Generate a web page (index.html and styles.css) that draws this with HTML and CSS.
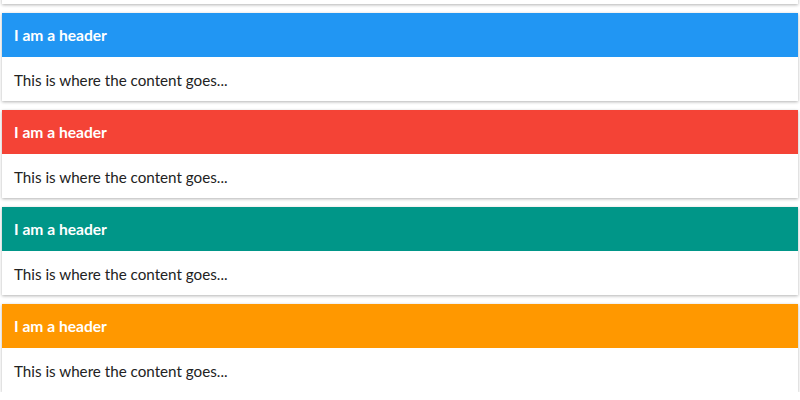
FILE: index.html
```html
<!DOCTYPE html>
<html>
<head>
<meta charset="utf-8">
<link rel="stylesheet" href="styles.css">
</head>
<body>
<div class="list">
  <div class="card card-offscreen"></div>
  <div class="card">
    <div class="card-header blue">I am a header</div>
    <div class="card-body">This is where the content goes...</div>
  </div>
  <div class="card">
    <div class="card-header red">I am a header</div>
    <div class="card-body">This is where the content goes...</div>
  </div>
  <div class="card">
    <div class="card-header teal">I am a header</div>
    <div class="card-body">This is where the content goes...</div>
  </div>
  <div class="card">
    <div class="card-header orange">I am a header</div>
    <div class="card-body">This is where the content goes...</div>
  </div>
</div>
</body>
</html>
```
FILE: styles.css
```css
html, body {
  margin: 0;
  padding: 0;
  background: #fff;
  overflow: hidden;
}
body {
  font-family: Lato, "Open Sans", sans-serif;
  font-size: 15.2px;
  color: #222;
}
.list {
  display: flex;
  flex-direction: column;
  gap: 9px;
  padding: 0 2px;
  margin-top: -84px;
}
.card {
  background: #fff;
  box-shadow: 0 1px 3px rgba(0, 0, 0, 0.3);
  display: flex;
  flex-direction: column;
}
.card-offscreen {
  height: 88px;
}
.card-header {
  height: 44px;
  display: flex;
  align-items: center;
  padding: 0 12px;
  color: #fff;
  font-weight: bold;
  font-size: 15.6px;
}
.card-body {
  height: 44px;
  box-sizing: border-box;
  display: flex;
  align-items: center;
  padding: 1px 12px 0;
}
.blue { background: #2196f3; }
.red { background: #f44336; }
.teal { background: #009688; }
.orange { background: #ff9800; }
```
